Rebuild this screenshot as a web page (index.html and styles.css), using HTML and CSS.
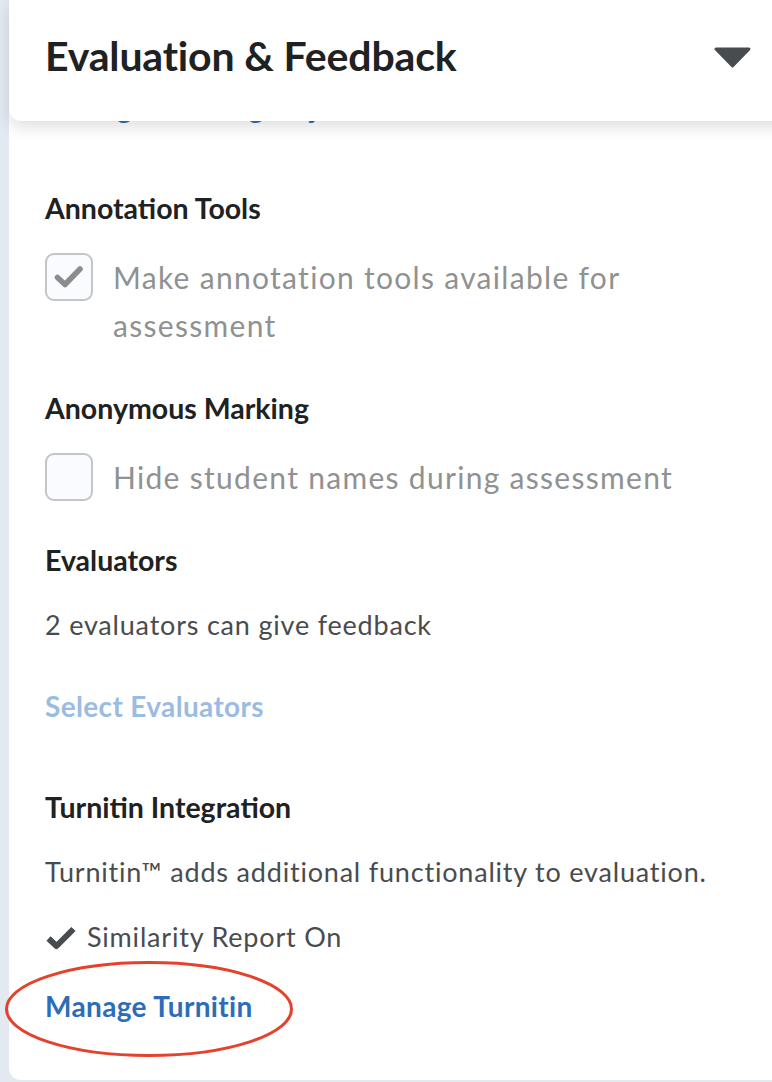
FILE: index.html
```html
<!DOCTYPE html>
<html lang="en">
<head>
    <meta charset="UTF-8">
    <meta name="viewport" content="width=device-width, initial-scale=1.0">
    <title>Evaluation &amp; Feedback</title>
    <link rel="stylesheet" href="styles.css">
</head>
<body>
    <div class="panel">
        <div class="panel-head">
            <h2>Evaluation &amp; Feedback</h2>
            <svg class="caret" width="37" height="21" viewBox="0 0 37 21">
                <polygon points="2,2 35,2 18.5,19" fill="#494c4e" stroke="#494c4e" stroke-width="3" stroke-linejoin="round"/>
            </svg>
        </div>

        <div class="panel-body">
            <div class="field field-first">
                <a class="link link-row" href="#">Manage Learning Objectives</a>
            </div>

            <div class="field">
                <h3 class="field-title">Annotation Tools</h3>
                <label class="check disabled">
                    <span class="box">
                        <svg width="44" height="44" viewBox="0 0 44 44">
                            <polyline points="10.5,22.5 18,29.5 33,14" fill="none" stroke="#8b8c8d" stroke-width="5.5" stroke-linecap="round" stroke-linejoin="round"/>
                        </svg>
                    </span>
                    <span class="check-text">Make annotation tools available for assessment</span>
                </label>
            </div>

            <div class="field">
                <h3 class="field-title">Anonymous Marking</h3>
                <label class="check disabled">
                    <span class="box"></span>
                    <span class="check-text">Hide student names during assessment</span>
                </label>
            </div>

            <div class="field">
                <h3 class="field-title">Evaluators</h3>
                <p class="text">2 evaluators can give feedback</p>
                <a class="link link-row muted" href="#">Select Evaluators</a>
            </div>

            <div class="field">
                <h3 class="field-title">Turnitin Integration</h3>
                <p class="text">Turnitin™ adds additional functionality to evaluation.</p>
                <p class="text status">
                    <svg width="32" height="25" viewBox="0 0 32 25">
                        <polyline points="3.5,13.5 11.5,21 28.5,4" fill="none" stroke="#494c4e" stroke-width="6" stroke-linejoin="round"/>
                    </svg>
                    Similarity Report On
                </p>
                <div class="manage">
                    <a class="link" href="#">Manage Turnitin</a>
                    <svg class="circled" width="292" height="100" viewBox="0 0 292 100">
                        <ellipse cx="146" cy="49" rx="142.5" ry="46.5" fill="none" stroke="#e4422c" stroke-width="3"/>
                    </svg>
                </div>
            </div>
        </div>
    </div>
</body>
</html>
```

FILE: styles.css
```css
body {
    margin: 0;
    background-color: #e3e9f1;
    font-family: Lato, "Open Sans", sans-serif;
    color: #494c4e;
    overflow: hidden;
}
.panel {
    margin-left: 9px;
    margin-right: -20px;
    background-color: #fff;
    border-bottom-left-radius: 12px;
    padding-bottom: 56px;
}
.panel-head {
    position: relative;
    z-index: 2;
    height: 121px;
    box-sizing: border-box;
    display: flex;
    align-items: center;
    justify-content: space-between;
    padding: 0 41px 10px 36px;
    background-color: #fff;
    border-bottom-left-radius: 12px;
    box-shadow: 0 6px 16px rgba(0, 0, 0, 0.13);
}
.panel-head h2 {
    margin: 0;
    font-size: 41px;
    line-height: 50px;
    font-weight: 700;
    letter-spacing: -0.15px;
    color: #202122;
}
.caret {
    margin-top: 3px;
}
.panel-body {
    margin-top: -32px;
    padding-left: 36px;
}
.field {
    margin-top: 41px;
}
.field-first {
    margin-top: 0;
}
.field-title {
    margin: 0;
    font-size: 28.5px;
    line-height: 36px;
    font-weight: 700;
    color: #202122;
}
.field .field-title + * {
    margin-top: 27px;
}
.check {
    display: flex;
    align-items: flex-start;
    gap: 20px;
}
.box {
    flex: none;
    width: 48px;
    height: 48px;
    box-sizing: border-box;
    border: 2px solid #c3c6c9;
    border-radius: 9px;
    background-color: #f9fbfe;
    display: flex;
    align-items: center;
    justify-content: center;
}
.check-text {
    max-width: 600px;
    font-size: 30px;
    line-height: 48px;
    letter-spacing: 1.3px;
}
.disabled .check-text {
    color: #8f9192;
}
.text {
    margin: 0;
    font-size: 27px;
    line-height: 40px;
    letter-spacing: 0.8px;
}
.link {
    display: block;
    font-size: 28px;
    line-height: 36px;
    font-weight: 700;
    letter-spacing: 0.35px;
    color: #2d6db8;
    text-decoration: none;
}
.link-row {
    padding-bottom: 24px;
}
.text + .link-row {
    margin-top: 43px;
}
.muted {
    color: #9bbce2;
}
.text + .text {
    margin-top: 25px;
}
.status {
    display: flex;
    align-items: center;
    gap: 10px;
}
.manage {
    position: relative;
    margin-top: 31px;
}
.circled {
    position: absolute;
    left: -42px;
    top: -28px;
}
```
